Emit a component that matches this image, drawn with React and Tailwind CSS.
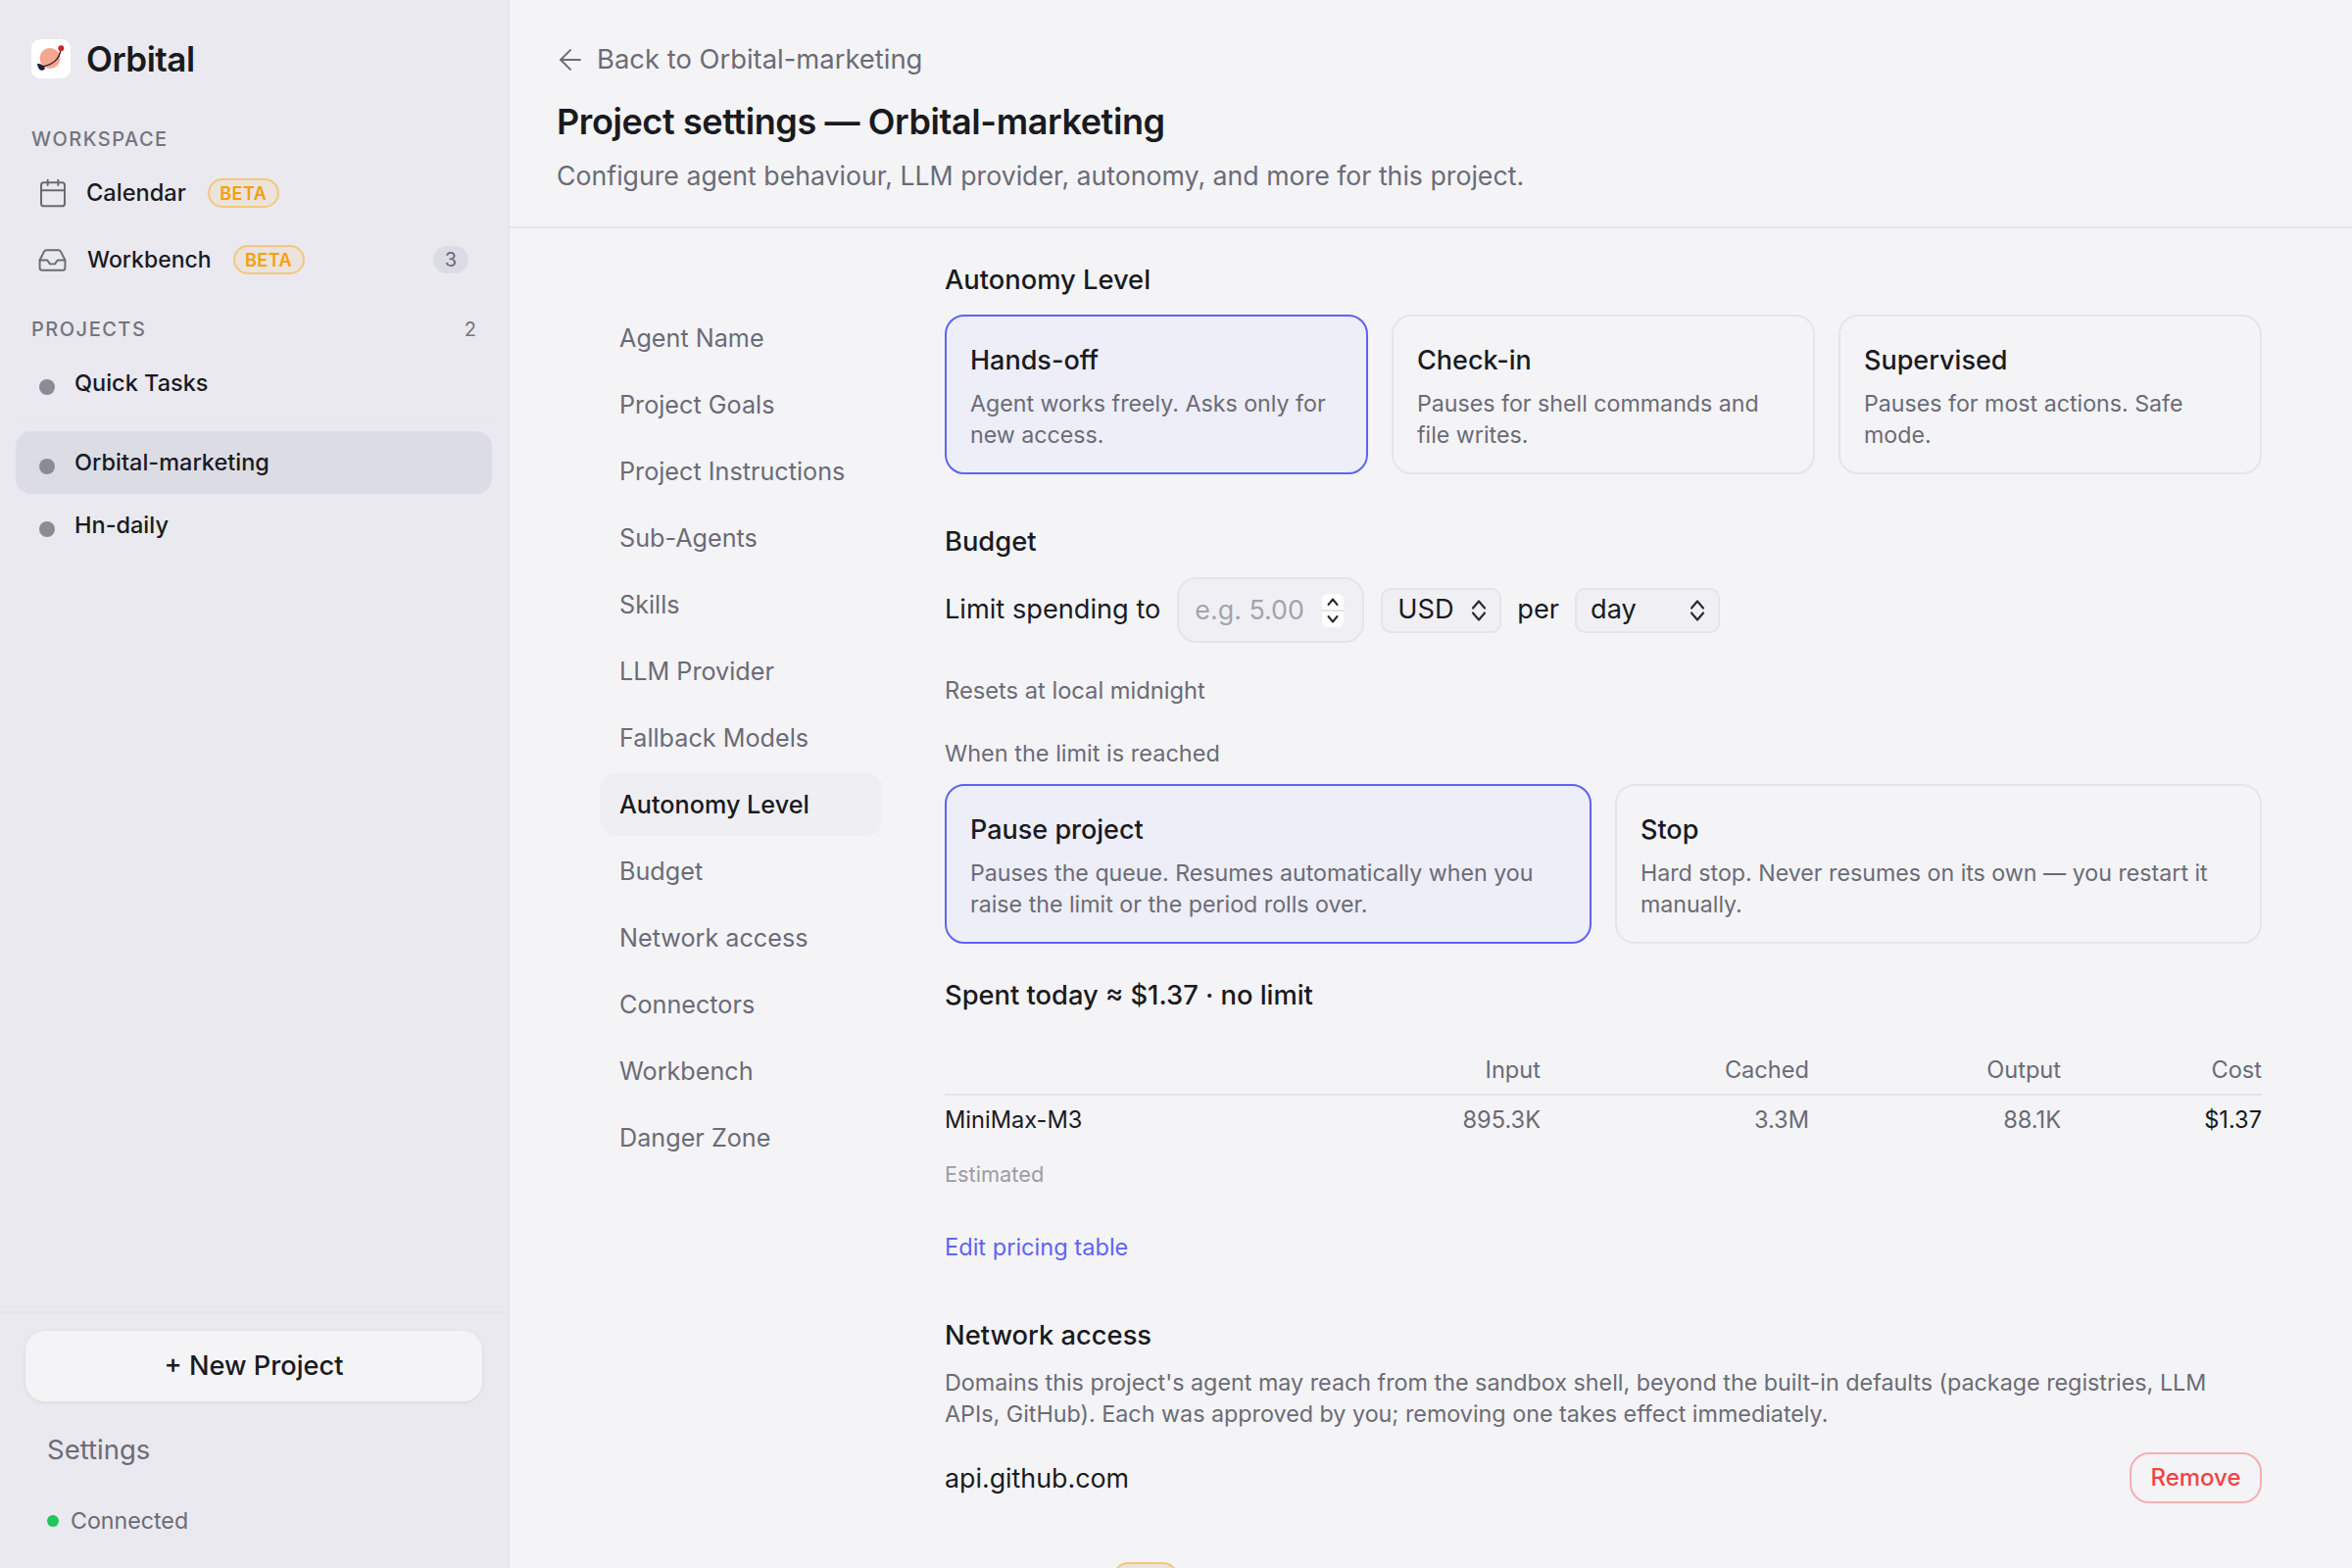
import { ArrowLeft, Calendar, Inbox } from 'lucide-react'

const NAV = [
  'Agent Name', 'Project Goals', 'Project Instructions', 'Sub-Agents', 'Skills', 'LLM Provider',
  'Fallback Models', 'Autonomy Level', 'Budget', 'Network access', 'Connectors', 'Workbench', 'Danger Zone',
]

const AUTONOMY = [
  { title: 'Hands-off', desc: 'Agent works freely. Asks only for new access.', active: true },
  { title: 'Check-in', desc: 'Pauses for shell commands and file writes.' },
  { title: 'Supervised', desc: 'Pauses for most actions. Safe mode.' },
]

const LIMIT = [
  { title: 'Pause project', desc: 'Pauses the queue. Resumes automatically when you raise the limit or the period rolls over.', active: true },
  { title: 'Stop', desc: 'Hard stop. Never resumes on its own — you restart it manually.' },
]

function Logo() {
  return (
    <svg width="40" height="40" viewBox="0 0 40 40">
      <rect width="40" height="40" rx="9" fill="#ffffff" />
      <circle cx="19" cy="19.5" r="10.5" fill="#f4a78f" />
      <path d="M30 10C29 20 22 26 11 28" fill="none" stroke="#1a1a2e" strokeWidth="1.3" />
      <path d="M6 25C10 25 13 27 14 30C12 33 7 33 6 25Z" fill="#1a1f3a" />
      <circle cx="30.3" cy="9.3" r="3" fill="#c9252d" />
    </svg>
  )
}

function Beta({ small }) {
  return (
    <span className={`flex h-[30px] items-center justify-center rounded-full border-2 border-[#f2c77f] bg-[#ebe3dc] text-[18px] font-semibold tracking-[0.5px] text-[#f59e0b] ${small ? 'w-[66px]' : 'w-[73px]'}`}>
      BETA
    </span>
  )
}

function Updown() {
  return (
    <svg width="18" height="24" viewBox="0 0 18 24" fill="none" stroke="#2a2a30" strokeWidth="2.2" strokeLinecap="round" strokeLinejoin="round">
      <path d="M3 9.5L9 2.5L15 9.5" />
      <path d="M3 14.5L9 21.5L15 14.5" />
    </svg>
  )
}

function Spinner() {
  return (
    <svg width="22" height="34" viewBox="0 0 22 34" fill="none">
      <rect width="22" height="34" rx="6" fill="#ffffff" />
      <path d="M0 17H22" stroke="#dcdce2" strokeWidth="1.5" />
      <path d="M6.5 11L11 5.5L15.5 11" stroke="#2a2a30" strokeWidth="2" strokeLinecap="round" strokeLinejoin="round" />
      <path d="M6.5 23L11 28.5L15.5 23" stroke="#2a2a30" strokeWidth="2" strokeLinecap="round" strokeLinejoin="round" />
    </svg>
  )
}

function Project({ name, active }) {
  return (
    <div className={`mx-[16px] flex h-[64px] items-center rounded-[16px] pl-[24px] ${active ? 'bg-[#dcdce5]' : ''}`}>
      <span className="mt-[8px] h-[16px] w-[16px] rounded-full bg-[#8b8b96]" />
      <span className="ml-[20px] text-[23.5px] font-medium text-[#1a1a1f]">{name}</span>
    </div>
  )
}

function OptionCard({ title, desc, active }) {
  return (
    <div className={`rounded-[20px] border-2 px-[24px] pb-[22px] pt-[27px] ${active ? 'border-[#5f63f2] bg-[#edeef7]' : 'border-[#e4e4ea]'}`}>
      <div className="text-[27px] font-medium leading-[36px] text-[#1a1a1f]">{title}</div>
      <div className="mt-[10px] text-[23.2px] leading-[32px] text-[#6b6b76]">{desc}</div>
    </div>
  )
}

function Heading({ children, className = '' }) {
  return <h2 className={`text-[27.3px] font-medium leading-[36px] text-[#1a1a1f] ${className}`}>{children}</h2>
}

export default function App() {
  return (
    <div className="flex h-[1600px] w-[2400px] overflow-hidden bg-[#f4f4f7] font-['Inter',sans-serif]">
      {/* Sidebar */}
      <aside className="flex h-full w-[520px] shrink-0 flex-col border-r-2 border-[#e4e4ea] bg-[#e9e9ef]">
        <div className="flex items-center pl-[32px] pt-[40px]">
          <Logo />
          <span className="ml-[16px] text-[35px] font-semibold leading-[40px] tracking-[-0.5px] text-[#1a1a1f]">Orbital</span>
        </div>

        <div className="mt-[50px] pl-[32px] text-[20px] font-medium leading-[24px] tracking-[1.5px] text-[#74747f]">WORKSPACE</div>
        <div className="mt-[9px] flex h-[68px] items-center pl-[38px]">
          <Calendar size={32} strokeWidth={1.5} className="text-[#6b6b76]" />
          <span className="ml-[18px] text-[23.6px] font-medium text-[#1a1a1f]">Calendar</span>
          <span className="ml-[22px]"><Beta /></span>
        </div>
        <div className="flex h-[68px] items-center pl-[38px] pr-[40px]">
          <Inbox size={31} strokeWidth={1.5} className="text-[#6b6b76]" />
          <span className="ml-[20px] text-[23px] font-medium text-[#1a1a1f]">Workbench</span>
          <span className="ml-[22px]"><Beta /></span>
          <span className="ml-auto flex h-[28px] w-[36px] items-center justify-center rounded-full bg-[#dcdce5] text-[20px] text-[#6b6b76]">3</span>
        </div>

        <div className="mt-[25px] flex items-center justify-between pl-[32px] pr-[32px] text-[20px] font-medium leading-[24px] text-[#74747f]">
          <span className="tracking-[1.5px]">PROJECTS</span>
          <span className="font-normal">2</span>
        </div>
        <div className="mt-[11px]"><Project name="Quick Tasks" /></div>
        <div className="mx-[16px] mb-[9px] mt-[7px] h-[1px] bg-[#e4e4ea]" />
        <Project name="Orbital-marketing" active />
        <Project name="Hn-daily" />

        <div className="mt-auto border-t-2 border-[#e4e4ea] px-[26px] pt-[18px]">
          <button className="flex h-[72px] w-full items-center justify-center rounded-[20px] bg-[#f4f4f7] text-[27.2px] font-medium text-[#1a1a1f] shadow-[0_1px_4px_rgba(0,0,0,0.08)]">
            + New Project
          </button>
          <div className="ml-[22px] mt-[29px] text-[27.5px] leading-[40px] text-[#6b6b76]">Settings</div>
          <div className="mb-[32px] ml-[22px] mt-[37px] flex h-[32px] items-center">
            <span className="h-[12px] w-[12px] rounded-full bg-[#22c55e]" />
            <span className="ml-[12px] text-[23.2px] text-[#6b6b76]">Connected</span>
          </div>
        </div>
      </aside>

      {/* Main */}
      <main className="min-w-0 flex-1">
        <header className="border-b-2 border-[#e4e4ea] pb-[32px] pl-[48px] pt-[41px]">
          <div className="flex h-[40px] items-center text-[27.4px] text-[#6b6b76]">
            <ArrowLeft size={34} strokeWidth={1.4} className="-ml-[3px]" />
            <span className="ml-[10px]">Back to Orbital-marketing</span>
          </div>
          <h1 className="mt-[18px] text-[36px] font-semibold leading-[50px] tracking-[-0.4px] text-[#1a1a1f]">Project settings — Orbital-marketing</h1>
          <p className="mt-[10px] text-[26.7px] leading-[40px] text-[#6b6b76]">Configure agent behaviour, LLM provider, autonomy, and more for this project.</p>
        </header>

        <div className="flex">
          <nav className="ml-[92px] w-[288px] shrink-0 pt-[80px]">
            {NAV.map(item => (
              <div
                key={item}
                className={`mb-[4px] flex h-[64px] items-center rounded-[16px] pl-[20px] pt-[2px] text-[25.2px] ${item === 'Autonomy Level' ? 'bg-[#efeff3] font-medium text-[#1a1a1f]' : 'text-[#6b6b76]'}`}
              >
                {item}
              </div>
            ))}
          </nav>

          <div className="ml-[64px] w-[1344px] shrink-0 pt-[35px]">
            <Heading>Autonomy Level</Heading>
            <div className="mt-[17px] grid grid-cols-3 gap-[24px]">
              {AUTONOMY.map(c => <OptionCard key={c.title} {...c} />)}
            </div>

            <Heading className="mt-[51px]">Budget</Heading>
            <div className="mt-[18px] flex items-center text-[27.2px] text-[#1a1a1f]">
              <span>Limit spending to</span>
              <div className="ml-[17px] flex h-[67px] w-[191px] items-center rounded-[20px] border-2 border-[#e4e4ea] bg-[#f0f0f4] pl-[16px]">
                <span className="text-[26.8px] text-[#a3a3ad]">e.g. 5.00</span>
                <span className="ml-[18px] flex"><Spinner /></span>
              </div>
              <div className="ml-[17px] flex h-[46px] w-[123px] items-center justify-between rounded-[10px] border-2 border-[#e4e4ea] bg-[#f0f0f4] pl-[15px] pr-[12px]">
                <span>USD</span>
                <Updown />
              </div>
              <span className="ml-[16px]">per</span>
              <div className="ml-[16px] flex h-[46px] w-[148px] items-center justify-between rounded-[10px] border-2 border-[#e4e4ea] bg-[#f0f0f4] pl-[14px] pr-[12px]">
                <span>day</span>
                <Updown />
              </div>
            </div>

            <p className="mt-[33px] text-[23.7px] leading-[32px] text-[#6b6b76]">Resets at local midnight</p>
            <p className="mt-[32px] text-[23.5px] leading-[32px] text-[#6b6b76]">When the limit is reached</p>
            <div className="mt-[15px] grid grid-cols-2 gap-[24px]">
              {LIMIT.map(c => <OptionCard key={c.title} {...c} />)}
            </div>

            <Heading className="mt-[35px]">Spent today ≈ $1.37 · no limit</Heading>

            <div className="mt-[42px] grid grid-cols-[408px_200px_274px_257px_205px] border-b-2 border-[#e4e4ea] pb-[8px] text-right text-[23.6px] leading-[32px] text-[#6b6b76]">
              <span />
              <span>Input</span>
              <span>Cached</span>
              <span>Output</span>
              <span>Cost</span>
            </div>
            <div className="grid grid-cols-[408px_200px_274px_257px_205px] pt-[9px] text-right text-[23.6px] leading-[32px] text-[#6b6b76]">
              <span className="text-left text-[#1a1a1f]">MiniMax-M3</span>
              <span>895.3K</span>
              <span>3.3M</span>
              <span>88.1K</span>
              <span className="text-[#1a1a1f]">$1.37</span>
            </div>
            <p className="mt-[24px] text-[21.8px] leading-[30px] text-[#9c9ca6]">Estimated</p>
            <a className="mt-[44px] block text-[23.6px] leading-[32px] text-[#5f63f2]">Edit pricing table</a>

            <Heading className="mt-[56px]">Network access</Heading>
            <p className="mt-[14px] max-w-[1300px] text-[23.3px] leading-[32px] text-[#6b6b76]">
              Domains this project's agent may reach from the sandbox shell, beyond the built-in defaults (package registries, LLM APIs, GitHub). Each was approved by you; removing one takes effect immediately.
            </p>
            <div className="mt-[23px] flex h-[52px] items-center justify-between">
              <span className="text-[26.8px] text-[#1a1a1f]">api.github.com</span>
              <button className="h-[52px] w-[135px] rounded-[20px] border-2 border-[#f7aeb0] text-[24px] font-medium text-[#ef4444]">Remove</button>
            </div>

            <div className="mt-[57px] flex items-start">
              <Heading className="mt-[6px]">Connectors</Heading>
              <span className="ml-[20px] mt-[3px]"><Beta small /></span>
            </div>
          </div>
        </div>
      </main>
    </div>
  )
}
